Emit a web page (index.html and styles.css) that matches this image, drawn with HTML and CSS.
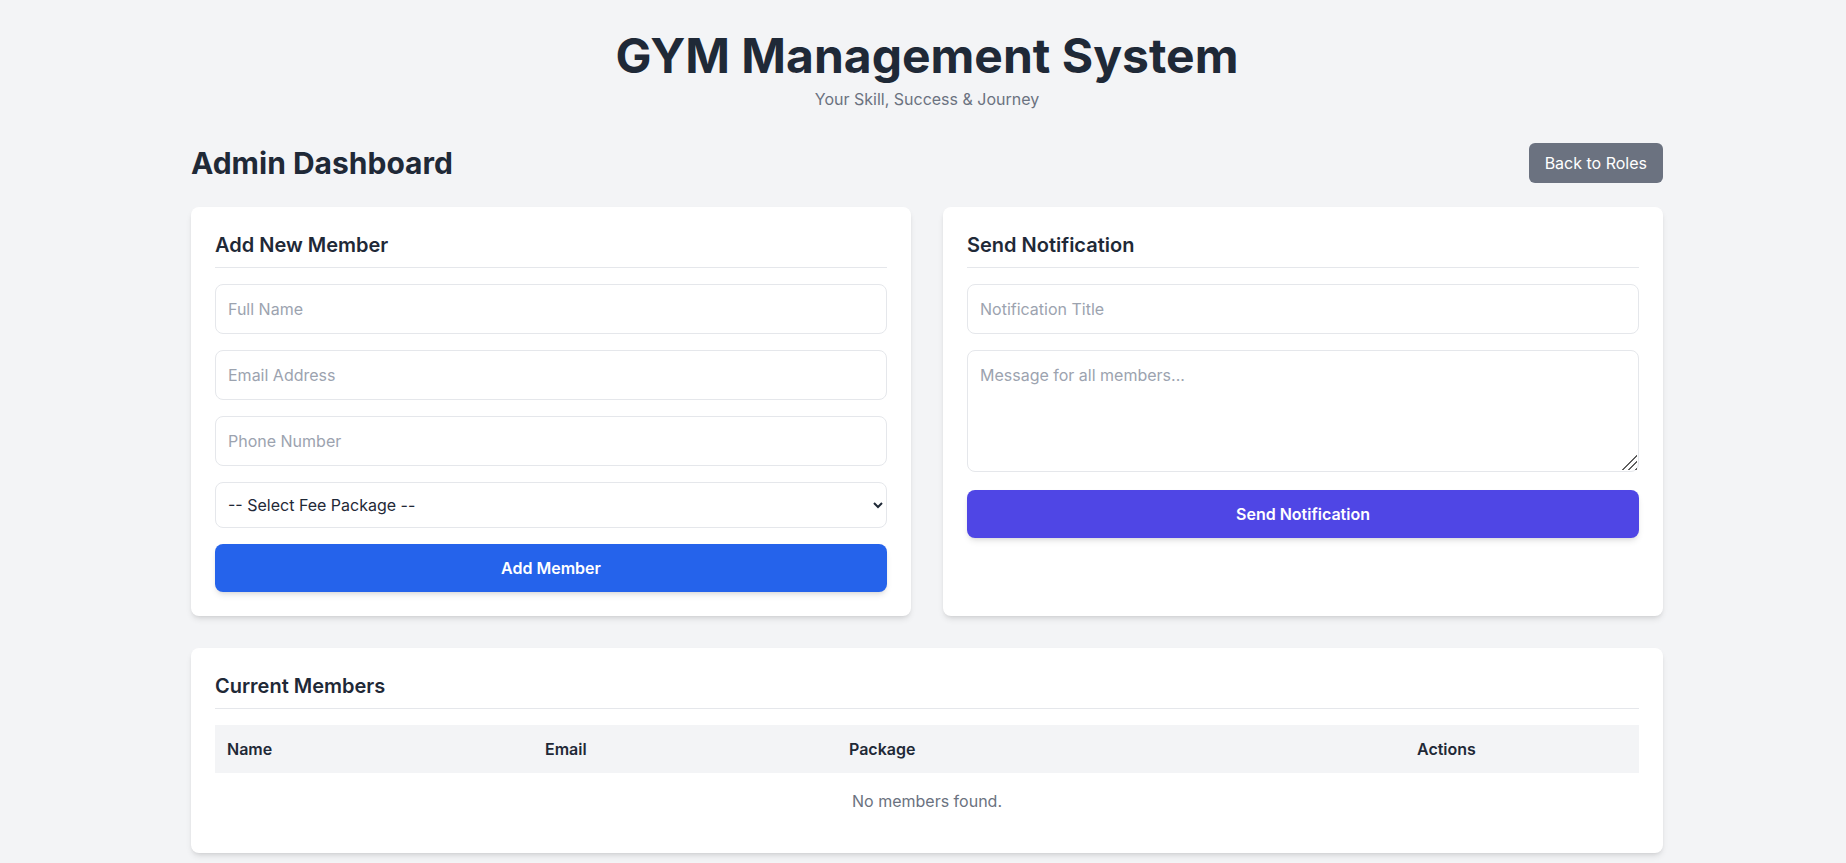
FILE: index.html
```html
<!DOCTYPE html>
<html lang="en">
<head>
<meta charset="utf-8">
<title>GYM Management System</title>
<link rel="stylesheet" href="styles.css">
</head>
<body>
<div class="page">
  <header class="site-header">
    <h1 class="site-title">GYM Management System</h1>
    <p class="site-subtitle">Your Skill, Success &amp; Journey</p>
  </header>

  <main>
    <div class="dash-head">
      <h2 class="dash-title">Admin Dashboard</h2>
      <button class="btn-back" type="button">Back to Roles</button>
    </div>

    <div class="grid-two">
      <section class="card">
        <h3 class="card-title">Add New Member</h3>
        <form class="form-stack">
          <input class="field" type="text" placeholder="Full Name">
          <input class="field" type="email" placeholder="Email Address">
          <input class="field" type="tel" placeholder="Phone Number">
          <select class="field field-select">
            <option>-- Select Fee Package --</option>
          </select>
          <button class="btn btn-blue" type="button">Add Member</button>
        </form>
      </section>

      <section class="card">
        <h3 class="card-title">Send Notification</h3>
        <form class="form-stack">
          <input class="field" type="text" placeholder="Notification Title">
          <div class="area-wrap">
            <textarea class="field field-area" rows="4" placeholder="Message for all members..."></textarea>
            <span class="grip" aria-hidden="true"></span>
          </div>
          <button class="btn btn-indigo" type="button">Send Notification</button>
        </form>
      </section>
    </div>

    <section class="card">
      <h3 class="card-title">Current Members</h3>
      <table class="members">
        <colgroup>
          <col class="c-name"><col class="c-email"><col class="c-pkg"><col class="c-act">
        </colgroup>
        <thead>
          <tr><th>Name</th><th>Email</th><th>Package</th><th>Actions</th></tr>
        </thead>
        <tbody>
          <tr><td class="empty" colspan="4">No members found.</td></tr>
        </tbody>
      </table>
    </section>
  </main>
</div>
</body>
</html>
```

FILE: styles.css
```css
* { box-sizing: border-box; }

html, body {
  margin: 0;
  background: #f3f4f6;
}

body {
  font-family: Inter, "Noto Sans", "Liberation Sans", sans-serif;
  color: #1f2937;
  padding-left: 8px;
}

.page {
  max-width: 1472px;
  margin: 0 auto;
  padding: 32px 0;
}

.site-header {
  text-align: center;
  margin-bottom: 32px;
}

.site-title {
  margin: 0;
  font-size: 48px;
  line-height: 1;
  font-weight: 700;
  color: #1f2937;
}

.site-subtitle {
  margin: 7px 0 0;
  font-size: 16px;
  line-height: 24px;
  color: #6b7280;
}

.dash-head {
  display: flex;
  justify-content: space-between;
  align-items: center;
  margin-bottom: 24px;
}

.dash-title {
  margin: 0;
  font-size: 30px;
  line-height: 36px;
  font-weight: 700;
  color: #1f2937;
}

.btn-back {
  font-family: inherit;
  font-size: 16px;
  line-height: 24px;
  padding: 8px 16px;
  border: 0;
  border-radius: 6px;
  background: #6b7280;
  color: #fff;
  cursor: pointer;
}

.grid-two {
  display: grid;
  grid-template-columns: 1fr 1fr;
  gap: 32px;
  margin-bottom: 32px;
}

.card {
  background: #fff;
  border-radius: 8px;
  padding: 24px;
  box-shadow: 0 4px 6px -1px rgba(0,0,0,0.1), 0 2px 4px -2px rgba(0,0,0,0.1);
}

.card-title {
  margin: 0 0 16px;
  padding-bottom: 8px;
  border-bottom: 1px solid #e5e7eb;
  font-size: 20px;
  line-height: 28px;
  font-weight: 600;
  color: #1f2937;
}

.form-stack {
  display: flex;
  flex-direction: column;
  gap: 16px;
  margin: 0;
}

.field {
  display: block;
  width: 100%;
  font-family: inherit;
  font-size: 16px;
  line-height: 24px;
  padding: 12px;
  border: 1px solid #e5e7eb;
  border-radius: 8px;
  background: #fff;
  color: #1f2937;
  margin: 0;
}

.field::placeholder {
  color: #9ca3af;
}

.field-select {
  height: 46px;
  padding: 0 8px;
}

.area-wrap {
  position: relative;
  margin-bottom: 2px;
}

.field-area {
  resize: none;
  height: 122px;
}

.grip {
  position: absolute;
  right: 2px;
  bottom: 2px;
  width: 20px;
  height: 20px;
  background: repeating-linear-gradient(135deg, transparent 0 3.2px, #5f5f5f 3.2px 4.6px);
  clip-path: polygon(100% 5%, 100% 100%, 5% 100%);
  pointer-events: none;
}

.btn {
  display: block;
  width: 100%;
  font-family: inherit;
  font-size: 16px;
  line-height: 24px;
  font-weight: 600;
  padding: 12px;
  border: 0;
  border-radius: 8px;
  color: #fff;
  cursor: pointer;
  box-shadow: 0 4px 6px -1px rgba(0,0,0,0.1), 0 2px 4px -2px rgba(0,0,0,0.1);
}

.btn-blue { background: #2563eb; }
.btn-indigo { background: #4f46e5; }

.members {
  width: 100%;
  border-collapse: collapse;
  table-layout: fixed;
}

.c-name { width: 318px; }
.c-email { width: 304px; }
.c-pkg { width: 568px; }
.c-act { width: 234px; }

.members th {
  background: #f3f4f6;
  text-align: left;
  font-size: 16px;
  line-height: 24px;
  font-weight: 600;
  padding: 12px;
  color: #1f2937;
}

.members td.empty {
  text-align: center;
  padding: 16px 12px;
  font-size: 16px;
  line-height: 24px;
  color: #6b7280;
}
```
